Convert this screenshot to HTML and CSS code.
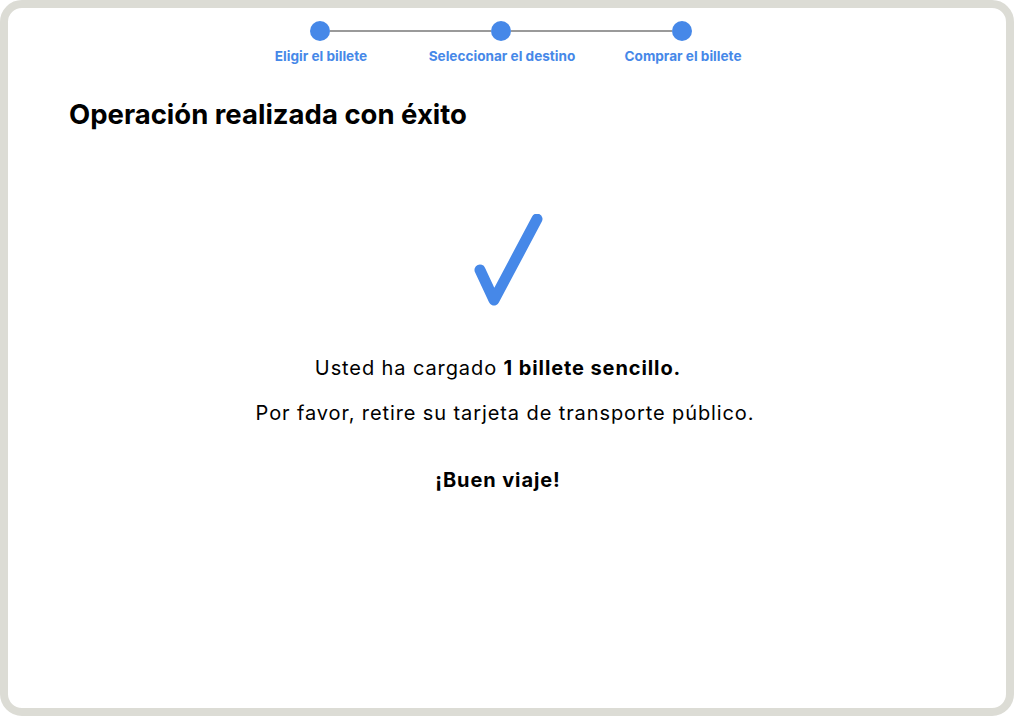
FILE: index.html
```html
<!DOCTYPE html>
<html lang="es">
<head>
<meta charset="utf-8">
<title>Operación realizada con éxito</title>
<link rel="stylesheet" href="styles.css">
</head>
<body>
<div class="frame">
  <ol class="stepper">
    <li class="step step-first">
      <div class="dot-row"><span class="seg"></span><span class="dot"></span><span class="seg"></span></div>
      <span class="label">Eligir el billete</span>
    </li>
    <li class="step">
      <div class="dot-row"><span class="seg"></span><span class="dot"></span><span class="seg"></span></div>
      <span class="label">Seleccionar el destino</span>
    </li>
    <li class="step step-last">
      <div class="dot-row"><span class="seg"></span><span class="dot"></span><span class="seg"></span></div>
      <span class="label">Comprar el billete</span>
    </li>
  </ol>
  <h1 class="title">Operación realizada con éxito</h1>
  <div class="check">
    <svg width="80" height="100" viewBox="0 0 80 100">
      <polyline points="8,56 22,86 65,5" fill="none" stroke="#4688e8" stroke-width="11" stroke-linecap="round" stroke-linejoin="round"/>
    </svg>
  </div>
  <div class="message">
    <p class="line line-short">Usted ha cargado <strong>1 billete sencillo.</strong></p>
    <p class="line">Por favor, retire su tarjeta de transporte público.</p>
    <p class="line line-short farewell"><strong>¡Buen viaje!</strong></p>
  </div>
</div>
</body>
</html>
```
FILE: styles.css
```css
* { box-sizing: border-box; }
html, body { margin: 0; padding: 0; background: #ffffff; }
body {
  font-family: Inter, "Noto Sans", sans-serif;
  color: #000;
}
.frame {
  width: 1014px;
  height: 716px;
  border: 8px solid #dcdcd5;
  border-radius: 22px;
  background: #fff;
  display: flex;
  flex-direction: column;
}
.stepper {
  list-style: none;
  margin: 13px 0 0 221px;
  padding: 0;
  display: grid;
  grid-template-columns: 181px 181px 181px;
}
.step {
  display: flex;
  flex-direction: column;
  align-items: center;
}
.dot-row {
  display: flex;
  align-items: center;
  width: 100%;
}
.seg {
  flex: 1;
  height: 2px;
  background: #9a9a9a;
}
.step-first .seg:first-child,
.step-last .seg:last-child { background: transparent; }
.dot {
  width: 20px;
  height: 20px;
  border-radius: 50%;
  background: #4688e8;
  flex: none;
}
.label {
  margin-top: 7px;
  padding-left: 3px;
  font-size: 13.6px;
  line-height: 17px;
  font-weight: 700;
  color: #4688e8;
  white-space: nowrap;
}
.title {
  margin: 32px 0 0 61px;
  font-size: 27.5px;
  line-height: 34px;
  font-weight: 700;
}
.check {
  display: flex;
  justify-content: center;
  margin-top: 83px;
  padding-left: 9px;
}
.check svg { display: block; }
.message {
  margin-top: 42px;
  text-align: center;
  font-size: 20px;
  line-height: 24px;
  letter-spacing: 0.9px;
  padding-right: 4px;
}
.line { margin: 0 0 21px; }
.line-short { padding-right: 14px; }
.farewell { margin-top: 43px; }
strong { font-weight: 700; }
```
